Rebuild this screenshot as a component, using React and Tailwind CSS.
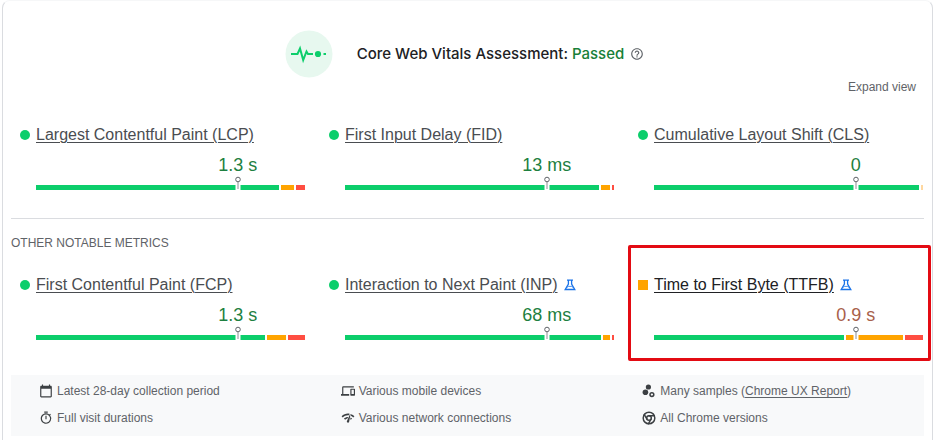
import React from 'react';
import { MdCalendarToday, MdDevices, MdHelpOutline, MdNetworkCheck, MdOutlineTimer } from 'react-icons/md';
import { Chrome } from 'lucide-react';

// good / average / poor are shares of the distribution bar
const coreMetrics = [
  { name: 'Largest Contentful Paint (LCP)', value: '1.3 s', good: 243, average: 13, poor: 9 },
  { name: 'First Input Delay (FID)', value: '13 ms', good: 254, average: 9, poor: 2 },
  { name: 'Cumulative Layout Shift (CLS)', value: '0', good: 265, average: 2, poor: 0 },
];

const otherMetrics = [
  { name: 'First Contentful Paint (FCP)', value: '1.3 s', good: 229, average: 19, poor: 17 },
  { name: 'Interaction to Next Paint (INP)', value: '68 ms', good: 256, average: 7, poor: 2, experimental: true },
  {
    name: 'Time to First Byte (TTFB)',
    value: '0.9 s',
    good: 190,
    average: 57,
    poor: 18,
    experimental: true,
    needsWork: true,
    highlighted: true,
  },
];

const FlaskIcon = () => (
  <svg viewBox="0 0 12 12" className="w-3 h-3 shrink-0" fill="none" stroke="#1a73e8" strokeWidth="1.3" aria-hidden="true">
    <path d="M3 1.2h6M4.4 1.2v3.8L1.2 10.5h9.6L7.6 5V1.2" />
    <path d="M2.8 8.6L4.2 7.4h3.6L9.2 8.6" strokeWidth="0.8" />
  </svg>
);

const SamplesIcon = () => (
  <svg viewBox="0 0 14 14" className="w-3.5 h-3.5 shrink-0" fill="currentColor" aria-hidden="true">
    <circle cx="6.4" cy="3" r="2.6" />
    <circle cx="3.4" cy="8.2" r="2.8" />
    <circle cx="9.9" cy="10.6" r="1.9" fill="none" stroke="currentColor" strokeWidth="1.5" />
  </svg>
);

const PulseIcon = () => (
  <svg viewBox="0 0 48 48" className="w-12 h-12" aria-hidden="true">
    <circle cx="24" cy="24" r="23.5" fill="#e7f8ef" />
    <path d="M6 24h6.5l2.5-5.5 3.2 11.5 3.3-8.5 1.5 2.5h5" fill="none" stroke="#0cce6b" strokeWidth="2" />
    <circle cx="33" cy="24" r="3.1" fill="#0cce6b" />
    <path d="M38.5 24h2.5" stroke="#0cce6b" strokeWidth="2" />
  </svg>
);

const Metric = ({ metric }) => {
  const { name, value, good, average, poor, experimental, needsWork, highlighted } = metric;

  return (
    <div className="relative">
      <div className="flex items-center h-5">
        <span className={`w-[10px] h-[10px] mr-1.5 shrink-0 ${needsWork ? 'bg-[#ffa400]' : 'bg-[#0cce6b] rounded-full'}`}></span>
        <a
          href="#"
          className={`text-base leading-5 underline underline-offset-2 decoration-1 whitespace-nowrap mr-1.5 ${
            highlighted ? 'text-[#202124]' : 'text-[#4a4d51]'
          }`}
        >
          {name}
        </a>
        {experimental && <FlaskIcon />}
      </div>

      <div className="ml-4">
        <div className={`ml-[50%] mt-2 text-center text-lg leading-6 ${needsWork ? 'text-[#a8604a]' : 'text-[#1e8040]'}`}>
          {value}
        </div>

        <div className="relative mt-2 h-[5px]">
          <div className="flex gap-0.5 h-full">
            <div className="bg-[#0cce6b]" style={{ flex: `${good} 1 0` }}></div>
            <div className={poor > 0 ? 'bg-[#ffa400]' : 'bg-[#ffd8a0]'} style={{ flex: `${average} 1 0` }}></div>
            {poor > 0 && <div className="bg-[#ff4e42]" style={{ flex: `${poor} 1 0` }}></div>}
          </div>
          {/* 75th percentile pin */}
          <svg viewBox="0 0 6 14" className="absolute left-3/4 bottom-0 -translate-x-1/2 w-1.5 h-3.5" aria-hidden="true">
            <rect x="0.5" y="5" width="5" height="9" fill="#fff" />
            <path d="M3 6v7" stroke="#8a8e93" strokeWidth="1" />
            <circle cx="3" cy="3.5" r="2.3" fill="#fff" stroke="#5f6368" strokeWidth="1" />
          </svg>
        </div>
      </div>

      {highlighted && (
        <div className="absolute -left-[10px] -right-2 -top-[30px] -bottom-[21px] border-3 border-[#e30b13] rounded-xs pointer-events-none"></div>
      )}
    </div>
  );
};

const MetricRow = ({ metrics }) => (
  <div className="grid grid-cols-3 gap-6 pl-[9px] pr-px">
    {metrics.map((m) => (
      <Metric key={m.name} metric={m} />
    ))}
  </div>
);

const InfoItem = ({ icon, children }) => (
  <li className="flex items-center gap-1 whitespace-nowrap">
    <span className="w-3.5 shrink-0 text-[#3c4043]">{icon}</span>
    <span>{children}</span>
  </li>
);

const App = () => {
  return (
    <main className="ml-0.5 mr-[3px] px-2 pb-1 border border-b-0 border-[#dadce0] border-t-[#f6f7f8] rounded-t-lg bg-white font-['Liberation_Sans',Arial,sans-serif]">
      <header className="flex items-center justify-center pt-[29px] pr-1.5">
        <PulseIcon />
        <h1 className="ml-6 font-[Inter,sans-serif] text-[15px] leading-6 font-medium text-[#202124]">
          Core Web Vitals Assessment: <span className="text-[#188038]">Passed</span>
        </h1>
        <button type="button" aria-label="About the assessment" className="ml-1.5 text-[#5f6368]">
          <MdHelpOutline className="w-3.5 h-3.5" />
        </button>
      </header>

      <div className="flex justify-end pr-2 pt-px">
        <button type="button" className="text-xs leading-4 text-[#5f6368]">
          Expand view
        </button>
      </div>

      <section className="pt-[30px]">
        <MetricRow metrics={coreMetrics} />
      </section>

      <section className="mt-7 border-t border-[#dadce0] pt-4">
        <h2 className="text-xs leading-4 text-[#5f6368] uppercase mb-6">Other Notable Metrics</h2>
        <MetricRow metrics={otherMetrics} />
      </section>

      <ul className="mt-[35px] pt-2 pb-[10px] pl-7 grid grid-cols-3 gap-x-5 gap-y-[11px] bg-[#f8f9fa] text-xs leading-4 text-[#5f6368]">
        <InfoItem icon={<MdCalendarToday className="w-3.5 h-3.5" />}>Latest 28-day collection period</InfoItem>
        <InfoItem icon={<MdDevices className="w-3.5 h-3.5" />}>Various mobile devices</InfoItem>
        <InfoItem icon={<SamplesIcon />}>
          Many samples (
          <a href="#" className="underline underline-offset-2">
            Chrome UX Report
          </a>
          )
        </InfoItem>
        <InfoItem icon={<MdOutlineTimer className="w-3.5 h-3.5" />}>Full visit durations</InfoItem>
        <InfoItem icon={<MdNetworkCheck className="w-3.5 h-3.5" />}>Various network connections</InfoItem>
        <InfoItem icon={<Chrome className="w-3.5 h-3.5" strokeWidth={2.5} />}>All Chrome versions</InfoItem>
      </ul>
    </main>
  );
};

export default App;
